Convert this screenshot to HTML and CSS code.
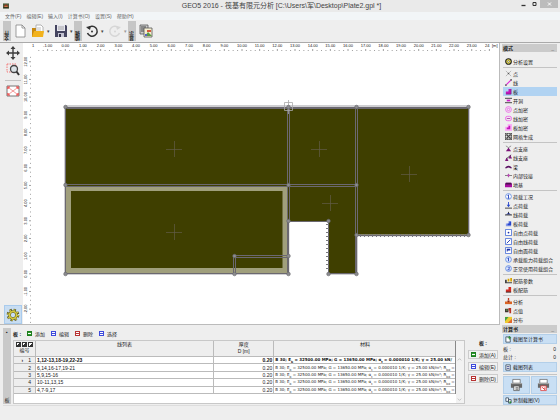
FILE: index.html
```html
<!DOCTYPE html>
<html lang="zh-CN">
<head>
<meta charset="UTF-8" />
<meta name="viewport" content="width=device-width, initial-scale=1" />
<title>GEO5 2016 - 筏基有限元分析</title>
<link rel="stylesheet" href="styles.css">
</head>
<body>

<header class="titlebar">
  <svg class="app-icon" viewBox="0 0 14 12"><rect width="14" height="12" fill="#4d5a3a"/><path d="M2 6 L7 2 L12 6 V9 H2Z" fill="#a33b22"/><path d="M1 9h12v2H1z" fill="#1c2718"/><path d="M4 6h2v2H4zM8 6h2v2H8z" fill="#e8d98a"/></svg>
  <h1>GEO5 2016 - 筏基有限元分析 [C:\Users\军\Desktop\Plate2.gpl *]</h1>
  <div class="window-buttons">
    <button aria-label="最小化"><svg viewBox="0 0 10 8"><path d="M3 5.500h4" stroke="#333" stroke-width="1.300"/></svg></button>
    <button aria-label="最大化"><svg viewBox="0 0 10 8"><path d="M3.500 2.500h3v3h-3z" fill="none" stroke="#333"/></svg></button>
    <button class="close" aria-label="关闭"><svg viewBox="0 0 10 8"><path d="M3.500 2.500l3 3m0-3l-3 3" stroke="#fff"/></svg></button>
  </div>
</header>

<nav class="menu">
  <button>文件(F)</button>
  <button>编辑(E)</button>
  <button>输入(I)</button>
  <button>计算书(O)</button>
  <button>设置(S)</button>
  <button>帮助(H)</button>
</nav>

<div class="toolbar">
  <span class="grip">文件</span>
  <button class="tool" aria-label="新建"><svg viewBox="0 0 14 14"><path d="M2 1h6l3 3v9H2z" fill="#fff" stroke="#777" stroke-width=".7"/><path d="M8 1v3h3" fill="none" stroke="#777" stroke-width=".7"/></svg></button>
  <button class="tool" aria-label="打开"><svg viewBox="0 0 14 14"><path d="M1 4h4l1 1h5v8H1z" fill="#c8890f"/><path d="M5 1h5l2 2v6H5z" fill="#fff" stroke="#888" stroke-width=".6"/><path d="M6 4h4M6 6h4" stroke="#999" stroke-width=".6"/><path d="M1 13L3 7h10l-1 6z" fill="#f2b21c"/></svg></button>
  <button class="drop" aria-label="最近文件">▾</button>
  <button class="tool" aria-label="保存"><svg viewBox="0 0 14 14"><path d="M1 1h11l1 1v11H1z" fill="#454560"/><path d="M3 1h8v6H3z" fill="#e8e8f0"/><path d="M4 3h6M4 5h6" stroke="#888" stroke-width=".7"/><path d="M4 9h6v4H4z" fill="#c4c4d2"/><path d="M5 10h2v3H5z" fill="#33334a"/></svg></button>
  <button class="drop" aria-label="另存为">▾</button>
  <span class="grip">编辑</span>
  <button class="tool" aria-label="撤销"><svg viewBox="0 0 14 14"><path d="M3 4.500A5 5 0 1 1 2.500 9" fill="none" stroke="#333" stroke-width="1.500"/><path d="M1 3l5-1-1 4z" fill="#333"/><circle cx="7" cy="7.500" r="1" fill="#333"/></svg></button>
  <button class="drop" aria-label="撤销列表">▾</button>
  <button class="tool" aria-label="重做" disabled><svg viewBox="0 0 14 14"><path d="M11 4.500A5 5 0 1 0 11.500 9" fill="none" stroke="#d6d6d6" stroke-width="1.500"/><path d="M13 3L8 2l1 4z" fill="#d6d6d6"/><circle cx="7" cy="7.500" r="1" fill="#d6d6d6"/></svg></button>
  <button class="drop faded" aria-label="重做列表">▾</button>
  <span class="grip">显示</span>
  <button class="tool" aria-label="图片列表"><svg viewBox="0 0 14 14"><path d="M1 1h8v9H1z" fill="#ccc" stroke="#555" stroke-width=".8"/><path d="M2 3h5M2 5h3M2 7h3" stroke="#444"/><path d="M5 4h8v9H5z" fill="#f6efd0" stroke="#555" stroke-width=".8"/><path d="M6 12l3-4 4 4z" fill="#5a9a46"/><path d="M8 6h4v2H8z" fill="#d4593c"/><path d="M6 10h2v2H6z" fill="#5865c7"/></svg></button>
</div>

<main class="workspace">
  <div class="left">
    <div class="view">
      <div class="view-tools">
        <button aria-label="平移"><svg viewBox="0 0 14 14"><path d="M7 2v10M2 7h10" stroke="#3d3d3d" stroke-width="1.400"/><path d="M7 0l2.500 3h-5zM7 14l2.500-3h-5zM0 7l3-2.500v5zM14 7l-3-2.500v5z" fill="#3d3d3d"/></svg></button>
        <button aria-label="缩放窗口"><svg viewBox="0 0 14 14"><path d="M1 2h9v8H1z" fill="none" stroke="#f27878" stroke-dasharray="1.500 1"/><circle cx="8" cy="7" r="3.500" fill="#dbe2e6" stroke="#444" stroke-width="1.300"/><path d="M10.500 9.500L13 13" stroke="#333" stroke-width="2"/></svg></button>
        <hr>
        <button aria-label="全部显示"><svg viewBox="0 0 14 14"><path d="M1 2h12v10H1z" fill="#fff" stroke="#777"/><path d="M3 4l8 6M11 4l-8 6" stroke="#f08080" stroke-width=".8"/><path d="M2 5V3h2M10 3h2v2M12 9v2h-2M4 11H2V9" fill="none" stroke="#e33" stroke-width="1.200"/></svg></button>
        <button class="settings" aria-label="视图设置"><svg viewBox="0 0 16 16"><circle cx="8" cy="8" r="5.500" fill="none" stroke="#5c5a28" stroke-width="3.500" stroke-dasharray="2.400 1.920"/><circle cx="8" cy="8" r="4" fill="none" stroke="#5c5a28" stroke-width="3"/><circle cx="8" cy="8" r="4" fill="none" stroke="#d4c940" stroke-width="1.900"/><circle cx="8" cy="8" r="5.700" fill="none" stroke="#d4c940" stroke-width="2" stroke-dasharray="1.400 3.076"/></svg></button>
      </div>
      <svg class="canvas" viewBox="23 43 476 281" preserveAspectRatio="xMinYMin meet">
        <g id="rulers"></g>
        <path class="plate" d="M65 107H469V235H356V274H328V221H288V274H65Z"/>
        <path class="halo" d="M65 106H469V235.500H357V274H328M288.500 222V274H65V106"/>
        <path class="selected" d="M68.500 188.500H285V270.500H68.500Z"/>
        <g class="edges">
          <path d="M65.500 107.500H468.500V235.500H356.500V273.500H328.500V221.500H288.500V273.500H65.500Z"/>
          <path d="M67 108.500H467M287.500 109V272M289.500 109V220M355.500 109V272M357.500 109V234M67 184.500H355M67 186.500H355M235 255.500H288M235 257.500H288M233.500 257V273M235.500 257V273"/>
        </g>
        <path class="supports" d="M360 235.500H467"/>
        <path class="supports" d="M327.500 224V272"/>
        <path class="centers" d="M166 149.500h16M174.500 141v16M311 149.500h16M319.500 141v16M401 174.500h16M409.500 166v16M322 203.500h16M330.500 195v16M166 232.500h16M174.500 224v16"/>
        <path class="cursor" d="M284.500 102.500h8v8h-8zM288.500 100v14"/>
        <g id="nodes"></g>
      </svg>
    </div>

    <section class="bottom">
      <div class="side-strip"><span>▪</span><span>板</span></div>
      <div class="bottom-body">
        <div class="actions">
          <strong>板 :</strong>
          <button><i class="sq green"></i>添加</button>
          <button><i class="sq blue"></i>编辑</button>
          <button><i class="sq red"></i>删除</button>
          <button><i class="sq blue"></i>选择</button>
        </div>
        <div class="table-row">
          <div class="table-box">
            <table>
              <colgroup><col class="c-num"><col class="c-lines"><col class="c-thick"><col class="c-mat"></colgroup>
              <thead>
                <tr>
                  <th><div class="mini"><button aria-label="全选"></button><button aria-label="取消选择"></button><button aria-label="反选"></button></div>编号</th>
                  <th>线列表</th>
                  <th>厚度<small>D [m]</small></th>
                  <th>材料</th>
                </tr>
              </thead>
              <tbody>
                <tr class="current"><th><b>›</b>1</th><td>1,12-13,18-19,22-23</td><td>0.20</td><td>B 30; E<sub>b</sub> = 32500.00 MPa; G = 13650.00 MPa; α<sub>t</sub> = 0.000010 1/K; γ = 25.00 kN/</td></tr>
                <tr><th>2</th><td>6,14,16-17,19-21</td><td>0.20</td><td>B 30; E<sub>b</sub> = 32500.00 MPa; G = 13650.00 MPa; α<sub>t</sub> = 0.000010 1/K; γ = 25.00 kN/m³; R<sub>bd</sub> =</td></tr>
                <tr><th>3</th><td>5,9,15-16</td><td>0.20</td><td>B 30; E<sub>b</sub> = 32500.00 MPa; G = 13650.00 MPa; α<sub>t</sub> = 0.000010 1/K; γ = 25.00 kN/m³; R<sub>bd</sub> =</td></tr>
                <tr><th>4</th><td>10-11,13,15</td><td>0.20</td><td>B 30; E<sub>b</sub> = 32500.00 MPa; G = 13650.00 MPa; α<sub>t</sub> = 0.000010 1/K; γ = 25.00 kN/m³; R<sub>bd</sub> =</td></tr>
                <tr><th>5</th><td>4,7-9,17</td><td>0.20</td><td>B 30; E<sub>b</sub> = 32500.00 MPa; G = 13650.00 MPa; α<sub>t</sub> = 0.000010 1/K; γ = 25.00 kN/m³; R<sub>bd</sub> =</td></tr>
              </tbody>
            </table>
            <div class="scroll">
              <svg viewBox="0 0 8 8"><path d="M2 5l2-2 2 2" fill="none" stroke="#bbb"/></svg>
              <svg viewBox="0 0 8 8"><path d="M2 3l2 2 2-2" fill="none" stroke="#bbb"/></svg>
            </div>
          </div>
          <div class="row-buttons">
            <strong>板 :</strong>
            <button><i class="sq green"></i>添加(A)</button>
            <button><i class="sq blue"></i>编辑(E)</button>
            <button><i class="sq red"></i>删除(D)</button>
          </div>
        </div>
      </div>
    </section>
  </div>

  <aside class="panel">
    <h2>模式<span>_</span></h2>
    <div class="modes">
      <button><svg viewBox="0 0 8 8"><circle cx="4" cy="4" r="3.200" fill="#ecdf4c" stroke="#222" stroke-width="1.300"/><circle cx="4" cy="4" r="1" fill="#fff" stroke="#222" stroke-width=".5"/></svg>分析设置</button>
      <hr>
      <button><svg viewBox="0 0 8 8"><path d="M1 1l6 6M7 1L1 7" stroke="#999" stroke-width=".7"/><circle cx="4" cy="4" r=".9" fill="#555"/></svg>点</button>
      <button><svg viewBox="0 0 8 8"><path d="M1 7l6-6" stroke="#e020d8" stroke-width="1.300"/><path d="M0 6h2v2H0zM6 0h2v2H6z" fill="#777"/></svg>线</button>
      <button class="active"><svg viewBox="0 0 8 8"><path d="M4 1h3v6H1V4h3z" fill="#c313bb"/><path d="M1 7h6V1" fill="none" stroke="#58215f" stroke-width=".6"/></svg>板</button>
      <button><svg viewBox="0 0 8 8"><path d="M0 1.500h8M0 6.500h8" stroke="#333"/><path d="M2 3h4v2H2z" fill="#d21bc9"/></svg>开洞</button>
      <button><svg viewBox="0 0 8 8"><circle cx="4" cy="4" r="3.300" fill="none" stroke="#ef5be9" stroke-width=".9"/><circle cx="4" cy="4" r="1.400" fill="none" stroke="#ef5be9" stroke-width=".9"/></svg>点加密</button>
      <button><svg viewBox="0 0 8 8"><rect x=".5" y="1.500" width="7" height="5" rx="2.500" fill="none" stroke="#ef5be9"/><path d="M2 4h4" stroke="#b03aab"/></svg>线加密</button>
      <button><svg viewBox="0 0 8 8"><path d="M3 0h5v8H0V3h3z" fill="#f9b0f5"/><path d="M4 2h2v4H2V4h2z" fill="#c313bb"/></svg>板加密</button>
      <button><svg viewBox="0 0 8 8"><path d="M.5.500h7v7h-7zM3 0v8M5.500 0v8M0 3h8M0 5.500h8M0 0l8 8M8 0L0 8" fill="none" stroke="#333" stroke-width=".7"/></svg>网格生成</button>
      <hr>
      <button><svg viewBox="0 0 8 8"><path d="M1 1l3 2 3-2M4 3v2" stroke="#888" fill="none"/><path d="M1 7l3-4 3 4z" fill="#7b1278"/></svg>点支座</button>
      <button><svg viewBox="0 0 8 8"><path d="M1 6l6-5" stroke="#333"/><path d="M0 8l2-4 2 4zM4 5l2-4 2 4z" fill="#7b1278"/></svg>线支座</button>
      <button><svg viewBox="0 0 8 8"><path d="M0 6c1-4 7-4 8 0H6c-1-1-3-1-4 0z" fill="#5a1162"/></svg>梁</button>
      <button><svg viewBox="0 0 8 8"><path d="M0 4h8M4 2v4" stroke="#555" stroke-width=".8"/><circle cx="4" cy="4" r="1.300" fill="#c33bbd"/></svg>内部铰接</button>
      <button><svg viewBox="0 0 8 8"><path d="M1 2h6l1 2v3H0V4z" fill="#a90fa2"/><path d="M1 2h6l1 2H0z" fill="#4d1050"/></svg>地基</button>
      <hr>
      <button><svg viewBox="0 0 8 8"><circle cx="4" cy="4" r="3.300" fill="#fff" stroke="#668fe0"/><path d="M4 2v4M3 6h2M3 3l1-1" stroke="#1c3fc0" fill="none"/></svg>荷载工况</button>
      <button><svg viewBox="0 0 8 8"><path d="M0 7h8" stroke="#333"/><path d="M4 0v4" stroke="#2545cc"/><path d="M2 3h4L4 6z" fill="#2545cc"/></svg>点荷载</button>
      <button><svg viewBox="0 0 8 8"><path d="M1 4l3-2 3 2z" fill="#2037b5"/><path d="M0 4.500h8M4 1v2" stroke="#222"/></svg>线荷载</button>
      <button><svg viewBox="0 0 8 8"><path d="M4 1h3v6H1V4h3z" fill="#8798e8"/><path d="M5 2h2v4H3V4h2z" fill="#2545cc"/></svg>板荷载</button>
      <button><svg viewBox="0 0 8 8"><path d="M.5.500h7v7h-7z" fill="#fff" stroke="#4e72d8"/><circle cx="4" cy="4" r="1" fill="#1830a8"/></svg>自由点荷载</button>
      <button><svg viewBox="0 0 8 8"><path d="M.5.500h7v7h-7z" fill="#fff" stroke="#4e72d8"/><path d="M2 6l4-4" stroke="#1830a8"/></svg>自由线荷载</button>
      <button><svg viewBox="0 0 8 8"><path d="M.5.500h7v7h-7z" fill="#fff" stroke="#4e72d8"/><path d="M2 2h4v2H3v1H2z" fill="#1830a8"/></svg>自由面荷载</button>
      <button><svg viewBox="0 0 8 8"><circle cx="4" cy="4" r="3.300" fill="#dfe8ff" stroke="#668fe0"/><path d="M4 2v4M3 3l1-1" stroke="#1c3fc0"/></svg>承载能力荷载组合</button>
      <button><svg viewBox="0 0 8 8"><circle cx="4" cy="4" r="3.300" fill="#dfe8ff" stroke="#668fe0"/><path d="M3 2.500h2v1.500L3 5.500h2.500" stroke="#1c3fc0" fill="none" stroke-width=".8"/></svg>正常使用荷载组合</button>
      <hr>
      <button><svg viewBox="0 0 8 8"><path d="M0 3h2v3h6v1H0z" fill="#444"/><path d="M3 2h2v3H3zM6 1h2v4H6z" fill="#d8a400"/></svg>配筋参数</button>
      <button><svg viewBox="0 0 8 8"><path d="M4 1h3v6H1V4h3z" fill="#d32a20"/><path d="M1 7h6" stroke="#333"/></svg>板配筋</button>
      <hr>
      <button><svg viewBox="0 0 8 8"><path d="M0 4h8v3H0z" fill="#d96424"/><path d="M4 0v3" stroke="#c0391c" stroke-width="1.500"/><path d="M2 3h4L4 5z" fill="#8e2812"/></svg>分析</button>
      <button><svg viewBox="0 0 8 8"><path d="M0 2h4v4H0z" fill="#433"/><path d="M4 1h3v6H5V4H4z" fill="#b53324"/><path d="M1 3h2v1H1z" fill="#6c5"/></svg>点值</button>
      <button><svg viewBox="0 0 8 8"><path d="M0 1h8v7H0z" fill="#edcb32"/><path d="M0 1h4L0 6z" fill="#45a144"/><path d="M8 3v5H3z" fill="#e2682c"/></svg>分布</button>
    </div>

    <h2>计算书<span>_</span></h2>
    <div class="report">
      <button class="wide"><svg viewBox="0 0 8 8"><path d="M1 1h5v6H1z" fill="#fff" stroke="#456"/><path d="M5 0v4M3 2h4" stroke="#268a2e"/></svg>截图至计算书</button>
      <dl>
        <dt>板 :</dt><dd>0</dd>
        <dt>总计 :</dt><dd>0</dd>
      </dl>
      <button class="wide"><svg viewBox="0 0 8 8"><path d="M1 1h5v6H1z" fill="#fff" stroke="#456"/><path d="M2 3h3M2 5h3" stroke="#348"/></svg>截图列表</button>
      <hr>
      <div class="printers">
        <button aria-label="打印"><svg viewBox="0 0 14 14"><path d="M3 1h8v4H3z" fill="#fff" stroke="#555" stroke-width=".7"/><path d="M1 5h12v5H1z" fill="#686868"/><path d="M1 5h12v1H1z" fill="#aaa"/><path d="M4 8h6v5H4z" fill="#eee" stroke="#444" stroke-width=".7"/><path d="M6 10h3M6 11.500h3" stroke="#444" stroke-width=".8"/></svg></button>
        <button aria-label="打印截图"><svg viewBox="0 0 14 14"><path d="M3 1h8v4H3z" fill="#fff" stroke="#555" stroke-width=".7"/><path d="M1 5h12v5H1z" fill="#686868"/><path d="M1 5h12v1H1z" fill="#aaa"/><path d="M4 8h6v5H4z" fill="#fff" stroke="#d33" stroke-width=".8"/><path d="M5.500 9.500l3 2.500V9.500" fill="none" stroke="#d33"/></svg></button>
      </div>
      <button class="wide"><svg viewBox="0 0 8 8"><path d="M1 1h3v4H1zM4 3h3v4H4z" fill="#fff" stroke="#456"/><path d="M5 5h2v2H5z" fill="#268a2e"/></svg>复制截图(V)</button>
    </div>
  </aside>
</main>

<footer class="status"></footer>

<script>
  const NS = 'http://www.w3.org/2000/svg';
  const rulers = document.getElementById('rulers');
  const nodes = document.getElementById('nodes');
  const METER = 17.67;
  const X0 = 65.3;
  const Y0 = 273.8;

  function add(parent, name, attrs, text) {
    const el = document.createElementNS(NS, name);
    for (const key in attrs) el.setAttribute(key, attrs[key]);
    if (text) el.textContent = text;
    parent.appendChild(el);
  }

  // horizontal ruler
  for (let i = -6; i <= 96; i++) {
    const x = X0 + i * METER / 4;
    add(rulers, 'path', { class: 'tick', d: `M${x} ${i % 4 ? 50 : 49}V51` });
  }
  for (let m = -1; m <= 23; m++) {
    add(rulers, 'text', { x: X0 + m * METER, y: 47, 'text-anchor': 'middle' }, m.toFixed(2));
  }
  add(rulers, 'text', { x: 33, y: 47, 'text-anchor': 'middle' }, '1');
  add(rulers, 'text', { x: 485, y: 47 }, '24');
  add(rulers, 'text', { x: 492, y: 47 }, '[m]');

  // vertical ruler
  for (let i = -11; i <= 49; i++) {
    const y = Y0 - i * METER / 4;
    add(rulers, 'path', { class: 'tick', d: `M${i % 4 ? 30 : 29} ${y}H31` });
  }
  for (let m = -2; m <= 12; m++) {
    const y = Y0 - m * METER;
    add(rulers, 'text', { x: 27, y: y, 'text-anchor': 'middle', transform: `rotate(-90 27 ${y})` }, m.toFixed(2));
  }

  [
    [65, 107], [288, 107], [356, 107], [468, 107],
    [65, 185], [288, 185], [356, 185],
    [288, 221], [328, 221], [356, 235], [468, 235],
    [234, 256], [288, 256],
    [65, 274], [234, 274], [288, 274], [328, 274], [356, 274]
  ].forEach(([cx, cy]) => add(nodes, 'circle', { cx: cx + 0.5, cy: cy, r: 1.8 }));
</script>

</body>
</html>
```

FILE: styles.css
```css
* {
  box-sizing: border-box;
}
body {
  margin: 0;
  height: 100vh;
  display: flex;
  flex-direction: column;
  overflow: hidden;
  background: #eeeeee;
  color: #222;
  font-family: "Liberation Sans", "Noto Sans CJK SC", sans-serif;
  font-size: 5px;
  line-height: 8px;
}
button {
  display: flex;
  align-items: center;
  margin: 0;
  padding: 0;
  border: none;
  background: none;
  color: inherit;
  font: inherit;
  white-space: nowrap;
}
svg {
  display: block;
  flex: none;
}
hr {
  margin: 1px 0;
  border: none;
  border-top: 1px solid #c4c4c4;
}

/* title bar and menu */
.titlebar {
  display: grid;
  grid-template-columns: 1fr auto 1fr;
  align-items: center;
  height: 12px;
  flex: none;
  padding-left: 3px;
  background: #eaeaea;
}
.app-icon {
  width: 6px;
  height: 6px;
}
.titlebar h1 {
  margin: 0;
  font-size: 7px;
  line-height: 12px;
  font-weight: normal;
  color: #444;
}
.window-buttons {
  display: flex;
  align-self: start;
  justify-self: end;
  margin-right: 2px;
}
.window-buttons svg {
  width: 11px;
  height: 8px;
}
.window-buttons .close {
  width: 18px;
  justify-content: center;
  background: #bcbcbc;
}
.menu {
  display: flex;
  gap: 5px;
  height: 8px;
  flex: none;
  padding-left: 5px;
  background: #f2f5f7;
  color: #666;
}

/* toolbar */
.toolbar {
  display: flex;
  align-items: center;
  height: 23px;
  flex: none;
  padding-left: 3px;
  border-bottom: 1px solid #aaa;
}
.grip {
  width: 8px;
  height: 20px;
  background: #c6c6c6;
  color: #222;
  font-weight: bold;
  writing-mode: vertical-rl;
  transform: rotate(180deg);
}
.tool {
  margin-left: 3px;
}
.tool svg {
  width: 14px;
  height: 14px;
}
.drop {
  width: 6px;
  justify-content: center;
  color: #444;
}
.drop.faded {
  color: #999;
}

/* workspace */
.workspace {
  flex: 1;
  min-height: 0;
  display: grid;
  grid-template-columns: 1fr 60px;
}
.left {
  display: flex;
  flex-direction: column;
  min-width: 0;
}
.view {
  flex: 1;
  min-height: 0;
  display: flex;
  background: #fff;
  border-right: 1px solid #bbb;
}
.view-tools {
  width: 23px;
  flex: none;
  display: flex;
  flex-direction: column;
  align-items: center;
  padding: 2px 0 0 2px;
  background: #eeeeee;
}
.view-tools svg {
  width: 14px;
  height: 16px;
}
.view-tools hr {
  width: 16px;
  margin: 3px 0 2px;
}
.view-tools .settings {
  width: 18px;
  height: 19px;
  margin-top: auto;
  justify-content: center;
  background: #c8ddf2;
  border: 1px solid #a9cbed;
}
.canvas {
  flex: 1;
  min-width: 0;
}
.canvas text {
  font-size: 4px;
  fill: #111;
}
.tick {
  stroke: #777;
  stroke-width: .7;
}
.plate {
  fill: #3f3f00;
}
.selected {
  fill: none;
  stroke: #a09f7c;
  stroke-width: 5;
}
.halo {
  fill: none;
  stroke: #cfcfd2;
  stroke-width: 2;
}
.edges path {
  fill: none;
  stroke: #6b6870;
  stroke-width: 1;
}
.centers {
  stroke: #625c48;
  stroke-width: .7;
}
.supports {
  stroke: #77777c;
  stroke-width: 3;
  stroke-dasharray: 1 3;
}
.cursor {
  fill: none;
  stroke: #aaa;
  stroke-width: .8;
}
#nodes circle {
  fill: #8c8c90;
  stroke: #66666a;
  stroke-width: .6;
}

/* bottom frame */
.bottom {
  display: flex;
  height: 81px;
  flex: none;
  gap: 2px;
  padding: 3px 0 1px 3px;
  border-top: 1px solid #bbb;
}
.side-strip {
  width: 8px;
  display: flex;
  flex-direction: column;
  justify-content: space-between;
  align-items: center;
  background: #c9c9c9;
}
.bottom-body {
  flex: 1;
  min-width: 0;
  display: flex;
  flex-direction: column;
}
.actions {
  display: flex;
  gap: 6px;
  height: 11px;
  align-items: center;
}
.sq {
  width: 5px;
  height: 5px;
  margin-right: 3px;
  border: 1px solid;
  background: linear-gradient(currentColor, currentColor) center / 3px 1px no-repeat #fff;
}
.sq.green {
  border-color: #1f7d1f;
  color: #fff;
  background-color: #2d9a2d;
}
.sq.blue {
  color: #3d49dc;
}
.sq.red {
  color: #b83232;
}
.table-row {
  flex: 1;
  min-height: 0;
  display: flex;
  gap: 3px;
  padding-right: 2px;
}
.table-box {
  flex: 1;
  min-width: 0;
  display: grid;
  grid-template-columns: 1fr 8px;
  align-items: start;
  margin-top: 1px;
  border: 1px solid #c8c8c8;
  background: #fff;
}
table {
  width: 100%;
  height: 53px;
  table-layout: fixed;
  border-collapse: separate;
  border-spacing: 0;
  line-height: 6px;
  border-right: 1px solid #888;
}
.c-num {
  width: 22px;
}
.c-thick {
  width: 60px;
}
.c-mat {
  width: 41%;
}
th,
td {
  padding: 0 1px;
  border-right: 1px solid #bbb;
  border-bottom: 1px solid #bbb;
  white-space: nowrap;
}
th:last-child,
td:last-child {
  padding-right: 0;
  border-right: none;
}
td:last-child {
  font-family: "DejaVu Sans", sans-serif;
  font-size: 4px;
}
th {
  background: #eeeeee;
  font-weight: normal;
}
thead tr {
  height: 16px;
}
thead th {
  vertical-align: top;
  line-height: 7px;
}
thead small {
  display: block;
  font-size: 5px;
}
tbody th {
  padding-right: 4px;
  text-align: right;
}
tbody th b {
  margin-right: 5px;
}
td:nth-child(3) {
  text-align: right;
}
sub {
  font-size: 3px;
  line-height: 0;
}
.current {
  font-weight: bold;
  color: #111;
}
.mini {
  display: flex;
  justify-content: space-around;
  padding-top: 1px;
}
.mini button {
  width: 5px;
  height: 5px;
  border: 1px solid #333;
  background: linear-gradient(135deg, #fff 50%, #333 50%);
}
.scroll {
  align-self: stretch;
  display: flex;
  flex-direction: column;
  justify-content: space-between;
  padding-top: 15px;
  background: #f2f2f2;
}
.scroll svg {
  width: 7px;
  height: 7px;
}
.row-buttons {
  width: 30px;
  flex: none;
  display: flex;
  flex-direction: column;
  gap: 3px;
}
.row-buttons strong {
  text-align: center;
}
.row-buttons button {
  height: 9px;
  padding-left: 2px;
  border: 1px solid #ccc;
  background: #f1f1f1;
}

/* right panel */
.panel {
  padding: 0 3px 0 2px;
}
.panel h2 {
  display: flex;
  justify-content: space-between;
  height: 8px;
  margin: 1px 0 0;
  padding: 0 3px 0 1px;
  background: #cbcbcb;
  font-size: 5px;
  line-height: 8px;
  font-weight: bold;
}
.modes {
  padding: 5px 0 0 1px;
}
.modes button {
  width: 100%;
  height: 9px;
  gap: 1px;
  padding-left: 2px;
}
.modes svg,
.wide svg {
  width: 7px;
  height: 7px;
}
.modes .active {
  background: #b1d3f2;
}
.report {
  display: flex;
  flex-direction: column;
  gap: 1px;
  padding: 1px 0 0 1px;
}
.report button {
  background: #c9dff4;
  border: 1px solid #b3cfe9;
}
.wide {
  height: 10px;
  gap: 1px;
  padding-left: 1px;
}
.report dl {
  display: grid;
  grid-template-columns: 1fr auto;
  margin: 0;
  padding-right: 1px;
}
.report dd {
  margin: 0;
}
.report hr {
  margin: 1px 0 0;
}
.printers {
  display: grid;
  grid-template-columns: 1fr 1fr;
  gap: 1px;
}
.printers button {
  height: 18px;
  justify-content: center;
}
.printers svg {
  width: 13px;
  height: 14px;
}

.status {
  height: 15px;
  flex: none;
  margin: 0 3px;
  border-top: 1px solid #ddd;
}
```
